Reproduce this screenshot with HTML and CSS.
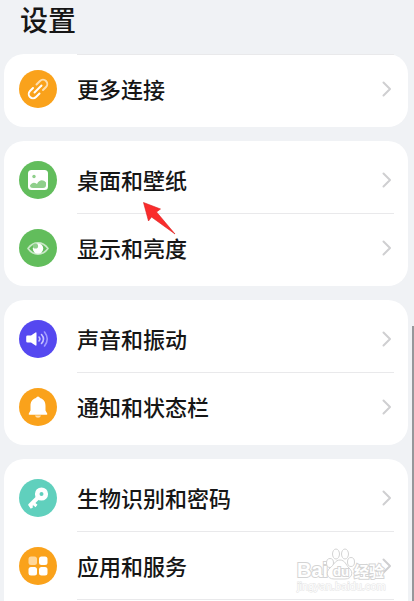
FILE: index.html
```html
<!DOCTYPE html>
<html lang="zh-CN">
    <head>
        <meta charset="UTF-8">
        <meta name="viewport" content="width=device-width, initial-scale=1">
        <title>设置</title>
        <link rel="stylesheet" href="styles.css">
    </head>
    <body>
        <header>
            <h1>设置</h1>
        </header>

        <main>
            <!-- Connections -->
            <ul class="card continued">
                <li>
                    <a href="#connections">
                        <svg class="icon orange" viewBox="0 0 38 38" fill="none" stroke="#fff" stroke-width="2" stroke-linecap="round">
                            <path d="M15.500 22.500l7-7"/>
                            <path d="M14 18l-3 3a4 4 0 0 0 6 6l3.500-3.500"/>
                            <path opacity=".65" d="M17.500 14.500l3.500-3.500a4 4 0 0 1 6 6l-3 3"/>
                        </svg>
                        <span class="label">更多连接</span>
                        <svg class="chevron" viewBox="0 0 10 16"><path d="M1.500 1.500L8 8l-6.500 6.500"/></svg>
                    </a>
                </li>
            </ul>

            <!-- Screen -->
            <ul class="card">
                <li>
                    <a href="#wallpaper">
                        <svg class="icon green" viewBox="0 0 38 38">
                            <rect x="9" y="9" width="20" height="20" rx="3.500" fill="#fff"/>
                            <circle cx="15" cy="15.500" r="1.700" fill="#8fcf8b"/>
                            <path fill="#8fcf8b" d="M11 24.500c2-3 4-3.500 7-1.500 2-4 6-5 9-1.500V24q0 3-3 3H14q-3 0-3-2.500z"/>
                        </svg>
                        <span class="label">桌面和壁纸</span>
                        <svg class="chevron" viewBox="0 0 10 16"><path d="M1.500 1.500L8 8l-6.500 6.500"/></svg>
                    </a>
                    <svg class="pointer" viewBox="0 0 33 33"><path fill="#fa2c2c" stroke="#d92020" stroke-width=".6" d="M.5.500l17 6.500-4 3L32 32 8.500 15l-3 4z"/></svg>
                </li>
                <li>
                    <a href="#display">
                        <svg class="icon green" viewBox="0 0 38 38">
                            <path d="M9 19.500c5.500-7.500 14.500-7.500 20 0-5.500 7.500-14.500 7.500-20 0z" fill="none" stroke="#c9e8c7" stroke-width="1.700" stroke-linejoin="round"/>
                            <circle cx="19" cy="19.500" r="5.200" fill="#fff"/>
                            <circle cx="16.500" cy="17" r="2.600" fill="#8fcf8b"/>
                        </svg>
                        <span class="label">显示和亮度</span>
                        <svg class="chevron" viewBox="0 0 10 16"><path d="M1.500 1.500L8 8l-6.500 6.500"/></svg>
                    </a>
                </li>
            </ul>

            <!-- Sound and notifications -->
            <ul class="card">
                <li>
                    <a href="#sound">
                        <svg class="icon blue" viewBox="0 0 38 38" fill="none" stroke-width="1.600" stroke-linecap="round">
                            <path fill="#fff" d="M8.500 15.500h3.500l4.500-3q1-.5 1 .7v11.600q0 1.200-1 .7l-4.500-3H8.500q-1.300 0-1.300-1.200v-4.600q0-1.200 1.300-1.200z"/>
                            <path stroke="#c7c3ff" d="M20 17q1.800 2 0 4M22.500 14.500q4 4.500 0 9"/>
                            <path stroke="#a29bff" d="M25.500 12q5.500 7 0 14"/>
                        </svg>
                        <span class="label">声音和振动</span>
                        <svg class="chevron" viewBox="0 0 10 16"><path d="M1.500 1.500L8 8l-6.500 6.500"/></svg>
                    </a>
                </li>
                <li>
                    <a href="#notifications">
                        <svg class="icon orange" viewBox="0 0 38 38">
                            <path fill="#fff" d="M19 8.500q1.500 0 2 1.500c4 1.300 5.500 4 5.500 8v4.500l1.700 3q.5 1.200-.8 1.200H10.600q-1.300 0-.8-1.200l1.700-3V18c0-4 1.500-6.700 5.500-8q.5-1.500 2-1.500z"/>
                            <path fill="#ffe0ad" d="M15.800 27.500h6.400q-1 2.200-3.200 2.200t-3.200-2.200z"/>
                        </svg>
                        <span class="label">通知和状态栏</span>
                        <svg class="chevron" viewBox="0 0 10 16"><path d="M1.500 1.500L8 8l-6.500 6.500"/></svg>
                    </a>
                </li>
            </ul>

            <!-- Security and apps -->
            <ul class="card last">
                <li>
                    <a href="#security">
                        <svg class="icon teal" viewBox="0 0 38 38" fill="none" stroke="#fff" stroke-linejoin="round">
                            <circle cx="22.500" cy="15" r="4.300" stroke-width="4.600"/>
                            <path d="M18.500 19L10.500 27" stroke-width="4"/>
                            <path d="M14 24l3.500 3M10.500 25.500l2.500 3.500" stroke-width="3"/>
                        </svg>
                        <span class="label">生物识别和密码</span>
                        <svg class="chevron" viewBox="0 0 10 16"><path d="M1.500 1.500L8 8l-6.500 6.500"/></svg>
                    </a>
                </li>
                <li>
                    <a href="#apps">
                        <svg class="icon orange" viewBox="0 0 38 38" fill="#fff">
                            <rect x="9.500" y="9.500" width="8.500" height="8.500" rx="2.500" fill="#ffd799"/>
                            <rect x="20" y="9.500" width="8.500" height="8.500" rx="2.500"/>
                            <rect x="9.500" y="20" width="8.500" height="8.500" rx="2.500"/>
                            <rect x="20" y="20" width="8.500" height="8.500" rx="2.500"/>
                        </svg>
                        <span class="label">应用和服务</span>
                        <svg class="chevron" viewBox="0 0 10 16"><path d="M1.500 1.500L8 8l-6.500 6.500"/></svg>
                    </a>
                </li>
                <li></li>
            </ul>
        </main>

        <div class="scrollbar"></div>

        <!-- Site mark over the list -->
        <svg class="watermark" viewBox="0 0 96 48">
            <g class="outline">
                <text x="2" y="30" font-size="20">Bai</text>
                <ellipse cx="35" cy="16" rx="3.500" ry="4.500"/>
                <ellipse cx="41" cy="7" rx="3.500" ry="5"/>
                <ellipse cx="50" cy="7" rx="3.500" ry="5"/>
                <ellipse cx="56" cy="15" rx="3.500" ry="4.500"/>
                <path d="M45 13c5 0 6 5 9 8 5 4 3 11-4 11H39c-7 0-9-7-4-11 4-3 5-8 10-8z"/>
                <text class="du" x="38" y="29" font-size="13">du</text>
                <text class="cjk" x="59" y="30" font-size="15">经验</text>
            </g>
            <text class="url" x="2" y="43" font-size="11">jingyan.baidu.com</text>
        </svg>
    </body>
</html>
```
FILE: styles.css
```css
/* General Body Styling */
body {
    font-family: "Noto Sans CJK SC", sans-serif;
    margin: 0;
    background-color: #f0f2f5;
    color: #161616;
    display: flex;
    flex-direction: column;
    min-height: 100vh;
    position: relative;
}

/* Header Styling */
header {
    padding: 0 20px 16px;
}

h1 {
    margin: 0;
    font-size: 28px;
    line-height: 38px;
    font-weight: 500;
}

/* Card Styling */
main {
    display: flex;
    flex-direction: column;
    flex: 1;
    gap: 14px;
    padding: 0 6px 0 4px;
}

.card {
    margin: 0;
    padding: 5px 14px 5px 15px;
    list-style: none;
    background-color: #fff;
    border-radius: 20px;
}

/* First card carries on from the rows above it */
.card.continued {
    padding-top: 0;
}

.card.last {
    flex: 1;
    padding-bottom: 0;
    border-radius: 20px 20px 0 0;
}

/* Row Styling */
.card li {
    position: relative;
}

.card li + li::before,
.continued li::before {
    content: "";
    display: block;
    height: 1px;
    margin-left: 58px;
    background-color: #e9e9eb;
}

.card a {
    display: flex;
    align-items: center;
    height: 67px;
    color: inherit;
    text-decoration: none;
}

.label {
    flex: 1;
    margin-left: 20px;
    padding-bottom: 2px;
    font-size: 22px;
    line-height: 32px;
    font-weight: 500;
}

/* Icons */
.icon {
    width: 38px;
    height: 38px;
    border-radius: 50%;
}

.orange {
    background-color: #faa21b;
}

.green {
    background-color: #62bd5c;
}

.blue {
    background-color: #5548f0;
}

.teal {
    background-color: #60d0bd;
}

.chevron {
    width: 10px;
    height: 16px;
    margin-right: 2px;
    fill: none;
    stroke: #cfcfd1;
    stroke-width: 2;
    stroke-linecap: round;
    stroke-linejoin: round;
}

/* Overlays */
.pointer {
    position: absolute;
    left: 124px;
    top: 56px;
    width: 33px;
    height: 33px;
    z-index: 1;
}

.scrollbar {
    position: absolute;
    top: 326px;
    right: 0;
    bottom: 0;
    width: 2px;
    background-color: #96989b;
}

.watermark {
    position: absolute;
    right: 23px;
    bottom: 6px;
    width: 96px;
    height: 48px;
    font-family: "Liberation Sans", sans-serif;
    font-weight: bold;
    pointer-events: none;
}

.outline {
    fill: #fff;
    stroke: #d4d4d4;
    stroke-width: 1;
}

.outline text {
    stroke-width: 2;
    paint-order: stroke;
}

.outline .cjk {
    font-family: "Noto Sans CJK SC", sans-serif;
}

.url {
    fill: #fff;
    stroke: #e4e4e4;
    stroke-width: 1;
    font-weight: normal;
    paint-order: stroke;
}
```
